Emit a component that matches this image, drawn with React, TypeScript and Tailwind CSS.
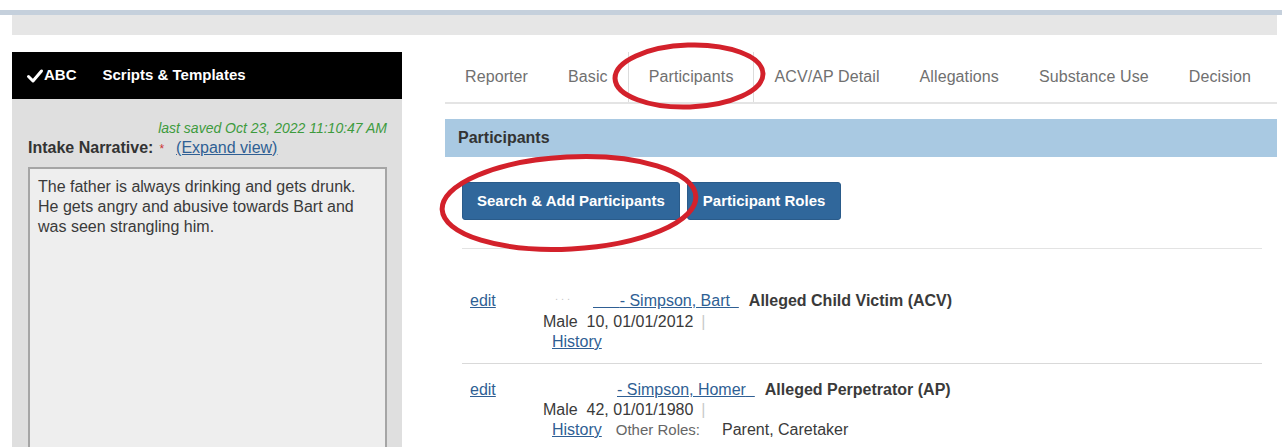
import React from "react";

const tabs = [
  "Reporter",
  "Basic",
  "Participants",
  "ACV/AP Detail",
  "Allegations",
  "Substance Use",
  "Decision",
];

function Link({ children }: { children: React.ReactNode }) {
  return <a className="cursor-pointer text-[#2f5f94] underline">{children}</a>;
}

function NarrativePanel() {
  return (
    <aside className="w-[390px] shrink-0">
      <div className="flex h-[47px] items-center bg-black px-[14px] text-[15px] font-bold text-white">
        <svg viewBox="0 0 16 16" className="h-[16px] w-[18px]" aria-hidden="true">
          <path d="M1.5 8.5 L6 13 L14.5 3" fill="none" stroke="white" strokeWidth="3" strokeLinecap="round" strokeLinejoin="round" />
        </svg>
        <span>ABC</span>
        <span className="ml-[26px]">Scripts &amp; Templates</span>
      </div>
      <div className="h-[400px] bg-[#dfdfdf] pl-[16px] pr-[15px] pt-[20px]">
        <div className="text-right text-[14px] leading-[19px] italic text-[#3d9b3d]">
          last saved Oct 23, 2022 11:10:47 AM
        </div>
        <div className="leading-[19px]">
          <span className="font-bold text-[#333]">Intake Narrative:</span>
          <span className="ml-[6px] text-[12px] text-[#c33]">*</span>
          <span className="ml-[12px]">
            <Link>(Expand view)</Link>
          </span>
        </div>
        <div className="mt-[8px] h-[300px] border-2 border-[#a5a5a5] bg-[#eeeeee] px-[8px] pt-[8px] leading-[20px] text-[#3a3a3a]">
          The father is always drinking and gets drunk. He gets angry and abusive towards Bart and was seen strangling him.
        </div>
      </div>
    </aside>
  );
}

function ParticipantRow({
  name,
  role,
  details,
  leadPad,
  dots,
  other,
  className,
}: {
  name: string;
  role: string;
  details: string;
  leadPad: string;
  dots?: boolean;
  other?: boolean;
  className: string;
}) {
  return (
    <div className={`flex leading-[20px] ${className}`}>
      <div className="w-[81px] shrink-0 pl-[8px]">
        <Link>edit</Link>
      </div>
      <div className="text-[#3a3a3a]">
        <div className="flex items-baseline">
          {dots ? (
            <span className="ml-[12px] w-[38px] -translate-y-[6px] text-[11px] tracking-[3px] text-[#c8c8c8]">...</span>
          ) : (
            <span className="w-[74px]" />
          )}
          <Link>
            {leadPad}
            {name}
            {"\u00a0\u00a0"}
          </Link>
          <span className="ml-[10px] font-bold">{role}</span>
        </div>
        <div>
          {details}
          <span className="ml-[8px] text-[#c9c9c9]">|</span>
        </div>
        <div className="pl-[9px]">
          <Link>History</Link>
          {other && (
            <>
              <span className="ml-[14px] text-[15px] text-[#666]">Other Roles:</span>
              <span className="ml-[22px]">Parent, Caretaker</span>
            </>
          )}
        </div>
      </div>
    </div>
  );
}

function ParticipantsTab() {
  return (
    <main className="ml-[43px] flex-1">
      <nav className="flex h-[52px] border-b-2 border-[#e4e4e4]">
        {tabs.map((t) => (
          <div
            key={t}
            className={`flex h-[50px] items-center px-[20px] tracking-[0.1px] text-[#707070] ${
              t === "Participants" ? "border-x border-[#dcdcdc] bg-white px-[19px] text-[#606060]" : ""
            }`}
          >
            {t}
          </div>
        ))}
      </nav>

      <div className="mt-[15px] flex h-[38px] items-center bg-[#a9c9e2] px-[13px] font-bold text-[#333]">
        Participants
      </div>

      <div className="ml-[17px] mt-[25px] flex gap-[7px]">
        <button className="h-[38px] rounded-[3px] border border-[#2a5b8a] bg-[#30679b] px-[14px] text-[15px] font-bold text-white">
          Search &amp; Add Participants
        </button>
        <button className="h-[38px] rounded-[3px] border border-[#2a5b8a] bg-[#30679b] px-[15px] text-[15px] font-bold text-white">
          Participant Roles
        </button>
      </div>

      <div className="ml-[17px] mr-[15px] mt-[28px] border-t border-[#e3e3e3]">
        <ParticipantRow
          className="pb-[11px] pt-[42px]"
          dots
          leadPad={"\u00a0\u00a0\u00a0\u00a0\u00a0\u00a0"}
          name="- Simpson, Bart"
          role="Alleged Child Victim (ACV)"
          details={"Male\u00a0 10, 01/01/2012"}
        />
        <div className="border-t border-[#d9d9d9]" />
        <ParticipantRow
          className="pt-[16px]"
          leadPad=""
          name="- Simpson, Homer"
          role="Alleged Perpetrator (AP)"
          details={"Male\u00a0 42, 01/01/1980"}
          other
        />
      </div>
    </main>
  );
}

export default function App() {
  return (
    <div className="relative h-[447px] w-[1282px] overflow-hidden bg-white font-['Liberation_Sans',Arial,sans-serif] text-[16px] text-[#333]">
      <div className="h-[10px]" />
      <div className="h-[5px] bg-[#c5d0dc]" />
      <div className="ml-[12px] mr-[5px] h-[20px] bg-[#e6e6e6]" />

      <div className="flex pl-[12px] pr-[5px] pt-[17px]">
        <NarrativePanel />
        <ParticipantsTab />
      </div>

      {/* hand-drawn red circles */}
      <svg className="pointer-events-none absolute inset-0 h-full w-full" viewBox="0 0 1282 447" aria-hidden="true">
        <ellipse cx="689" cy="76" rx="74" ry="31" fill="none" stroke="#d3212b" strokeWidth="5" transform="rotate(-2 689 76)" />
        <ellipse cx="569" cy="203" rx="127" ry="46" fill="none" stroke="#d3212b" strokeWidth="5" transform="rotate(-3 569 203)" />
      </svg>
    </div>
  );
}
